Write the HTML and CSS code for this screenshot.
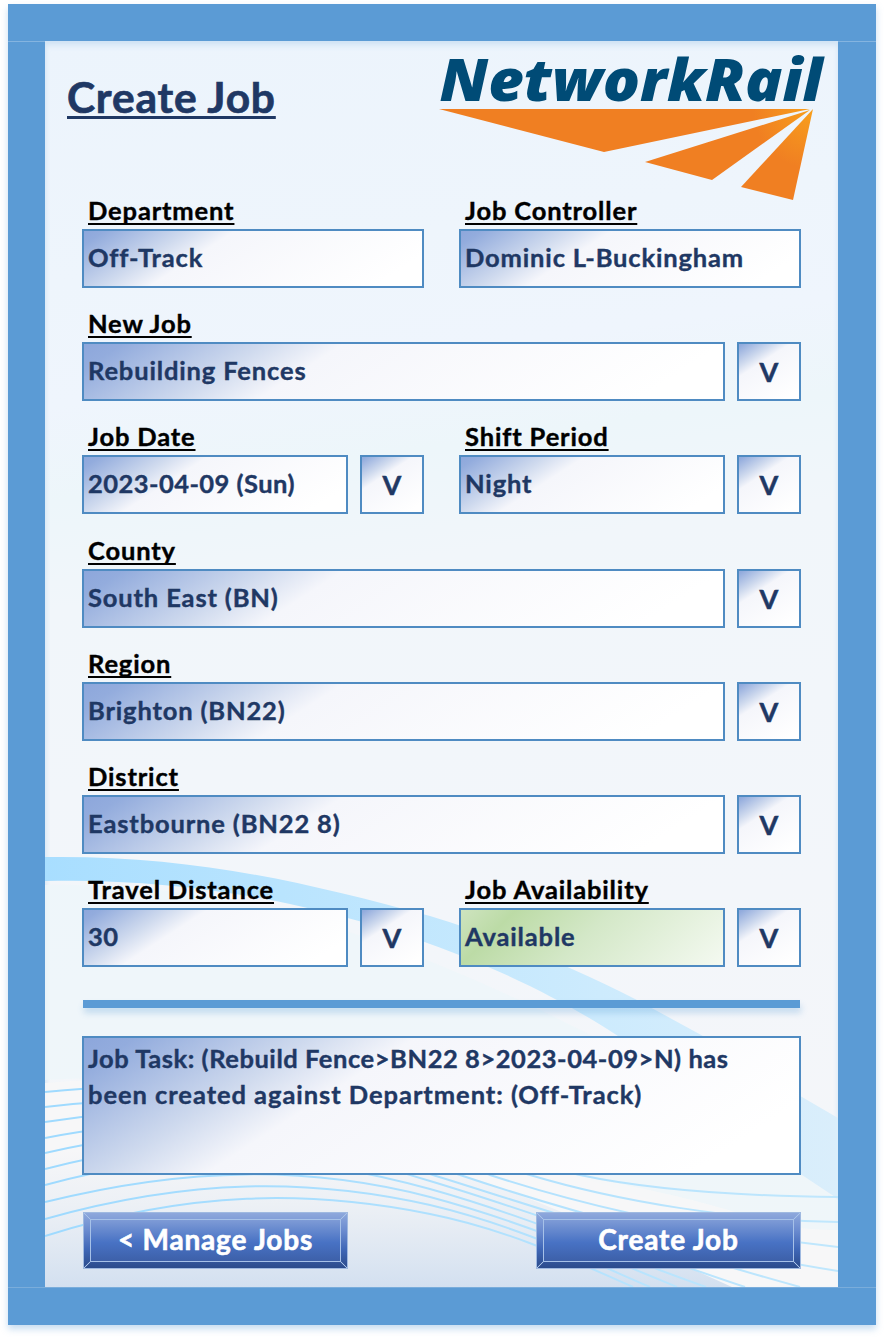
FILE: index.html
```html
<!DOCTYPE html>
<html lang="en">
<head>
<meta charset="utf-8">
<title>Create Job</title>
<link rel="stylesheet" href="styles.css">
</head>
<body>
<main class="frame">
  <div class="panel">
    <svg class="backdrop" viewBox="45 41 793 1246" width="793" height="1246" aria-hidden="true">
      <defs>
        <linearGradient id="ribbon" x1="0" x2="1" y1="0" y2="0">
          <stop offset="0" stop-color="#a8deff"/><stop offset=".3" stop-color="#b9e4fe"/><stop offset=".7" stop-color="#cdebfd"/><stop offset="1" stop-color="#daeefb"/>
        </linearGradient>
        <linearGradient id="floor" gradientUnits="userSpaceOnUse" x1="0" x2="0" y1="1150" y2="1287">
          <stop offset="0" stop-color="#d3e0f1" stop-opacity="0"/><stop offset=".4" stop-color="#d8e3f0" stop-opacity=".35"/><stop offset="1" stop-color="#d3e0f0"/>
        </linearGradient>
        <linearGradient id="strand" gradientUnits="userSpaceOnUse" x1="45" x2="838" y1="0" y2="0">
          <stop offset="0" stop-color="#9edaff"/><stop offset="1" stop-color="#c0e7fd"/>
        </linearGradient>
      </defs>
      <path fill="#edf6f9" opacity=".7" d="M45 885C300 880 500 990 640 1060L838 1200V1250C560 1190 330 1060 45 1080Z"/>
      <path fill="#f8f8f8" opacity=".8" d="M45 1083C230 1065 440 1150 600 1180S760 1230 838 1230V1287H45Z"/>
      <path fill="url(#floor)" d="M45 1150H330C450 1155 560 1212 690 1268L732 1287H45Z"/>
      <path fill="url(#ribbon)" d="M45 857C190 855 300 881 430 916C500 937 570 966 637 1000L703 1036L802 1097L838 1118V1199L802 1175L618 1036C500 958 290 875 45 881Z"/>
      <g fill="none" stroke="url(#strand)" stroke-width="2">
        <path d="M45 1092C240 1070 410 1135 580 1175C650 1190 740 1196 838 1197"/>
        <path d="M45 1107C240 1082 380 1132 530 1175C620 1202 735 1220 838 1222"/>
        <path d="M45 1122C235 1092 360 1133 490 1175C590 1208 710 1233 838 1247"/>
        <path d="M45 1138C230 1102 345 1138 460 1175C570 1212 720 1253 838 1271"/>
        <path d="M45 1153C220 1113 330 1143 430 1174C560 1215 690 1257 800 1287"/>
        <path d="M45 1169C215 1125 330 1150 430 1181C540 1214 640 1252 745 1287"/>
        <path d="M45 1185C205 1141 320 1159 430 1189C530 1217 615 1255 706 1287"/>
        <path d="M45 1202C190 1166 310 1166 430 1197C520 1221 600 1255 677 1287"/>
        <path d="M45 1219C190 1178 310 1178 430 1205C515 1225 585 1259 650 1287"/>
        <path d="M45 1236C190 1190 310 1190 430 1214C510 1230 574 1261 633 1287"/>
      </g>
    </svg>

    <header class="header">
      <h1 class="title">Create Job</h1>
      <svg class="logo" viewBox="438 30 390 174" width="390" height="174" role="img" aria-label="NetworkRail">
        <defs>
          <radialGradient id="flare" gradientUnits="userSpaceOnUse" cx="814" cy="109" r="60">
            <stop offset="0" stop-color="#f8a01c"/><stop offset="1" stop-color="#f07f22"/>
          </radialGradient>
        </defs>
        <text class="logo-text" x="440.5" y="101" textLength="383" lengthAdjust="spacingAndGlyphs">NetworkRail</text>
        <g fill="url(#flare)">
          <path d="M440 109H811L605 152Z"/>
          <path d="M811 110L646 162L713 180Z"/>
          <path d="M814 109L742 187L794 200Z"/>
        </g>
      </svg>
    </header>

    <form class="form">
      <div class="row">
        <div class="field"><label class="label">Department</label><div class="line"><div class="value">Off-Track</div></div></div>
        <div class="field"><label class="label">Job Controller</label><div class="line"><div class="value">Dominic L-Buckingham</div></div></div>
      </div>
      <div class="row">
        <div class="field"><label class="label">New Job</label><div class="line"><div class="value">Rebuilding Fences</div><button type="button" class="pick">V</button></div></div>
      </div>
      <div class="row">
        <div class="field"><label class="label">Job Date</label><div class="line"><div class="value numeric">2023-04-09 (Sun)</div><button type="button" class="pick">V</button></div></div>
        <div class="field"><label class="label">Shift Period</label><div class="line"><div class="value">Night</div><button type="button" class="pick">V</button></div></div>
      </div>
      <div class="row">
        <div class="field"><label class="label">County</label><div class="line"><div class="value">South East (BN)</div><button type="button" class="pick">V</button></div></div>
      </div>
      <div class="row">
        <div class="field"><label class="label">Region</label><div class="line"><div class="value">Brighton (BN22)</div><button type="button" class="pick">V</button></div></div>
      </div>
      <div class="row">
        <div class="field"><label class="label">District</label><div class="line"><div class="value">Eastbourne (BN22 8)</div><button type="button" class="pick">V</button></div></div>
      </div>
      <div class="row">
        <div class="field"><label class="label">Travel Distance</label><div class="line"><div class="value numeric">30</div><button type="button" class="pick">V</button></div></div>
        <div class="field"><label class="label">Job Availability</label><div class="line"><div class="value available">Available</div><button type="button" class="pick">V</button></div></div>
      </div>
    </form>

    <div class="divider"></div>
    <div class="message"><span class="message-lead">Job Task: (Rebuild Fence&gt;BN22 8&gt;2023-04-09&gt;N) has</span><br>been created against Department: (Off-Track)</div>
    <div class="actions">
      <button type="button" class="action"><span class="action-face">&lt; Manage Jobs</span></button>
      <button type="button" class="action"><span class="action-face">Create Job</span></button>
    </div>
  </div>
</main>
</body>
</html>
```
FILE: styles.css
```css
* { box-sizing: border-box; }

body {
  margin: 0;
  padding: 4px 9px 0 8px;
  height: 1339px;
  overflow: hidden;
  background: #fff;
  font-family: Lato, "Open Sans", sans-serif;
  font-weight: 700;
  color: #1f3864;
  -webkit-text-stroke: .4px currentColor;
}

.frame {
  width: 868px;
  height: 1321px;
  padding: 37px 38px 38px 37px;
  background:
    linear-gradient(#84b4e0, #84b4e0) 0 37px / 100% 1px no-repeat,
    linear-gradient(#7aaddb, #7aaddb) 0 1283px / 100% 1px no-repeat,
    #5b9bd5;
  box-shadow: 0 4px 7px rgba(91, 155, 213, .35);
}

.panel {
  position: relative;
  display: flex;
  flex-direction: column;
  height: 1246px;
  padding: 0 37px;
  background: linear-gradient(172deg, #ecf4fc 0, #eef5fc 18%, #eff5fd 27%, #edf6fa 34%, #f1f6fa 42%, #f3f6fa 70%, #f5f6f9 100%);
  box-shadow: inset 0 5px 6px -1px #cfe2f4, inset 1px 0 4px #deebf7;
}

.backdrop {
  position: absolute;
  inset: 0;
}

.header, .form, .divider, .message, .actions { position: relative; }

.header {
  display: flex;
  justify-content: space-between;
  height: 156px;
  margin: 0 -28px 0 -15px;
  padding-right: 2px;
}

.title {
  margin: 30px 0 0;
  font-size: 42.5px;
  line-height: 51px;
  letter-spacing: .8px;
  text-decoration: underline 3px;
  text-underline-offset: 3px;
  text-decoration-skip-ink: none;
  -webkit-text-stroke-width: .7px;
}

.logo {
  flex: none;
  margin-top: -11px;
}

.logo-text {
  font: italic 800 59px "Open Sans", "Noto Sans", sans-serif;
  fill: #004b76;
  -webkit-text-stroke: .8px #004b76;
}

.form {
  display: grid;
  grid-auto-rows: 91px;
  row-gap: 22.2px;
  height: 770px;
}

.row {
  display: flex;
  gap: 35px;
}

.field { flex: 1; min-width: 0; }

.label {
  display: block;
  width: max-content;
  height: 32px;
  margin-left: 6px;
  font-size: 25.5px;
  line-height: 27px;
  letter-spacing: .85px;
  color: #000;
  text-decoration: underline 2px;
  text-underline-offset: 3px;
  text-decoration-skip-ink: none;
}

.line {
  display: flex;
  gap: 12px;
}

.value, .pick, .message {
  border: 2px solid #4f8bc2;
  background: linear-gradient(147deg, #8ca6db 0, #93acdd 6%, #cfdaee 25%, #f5f6fb 36%, #fff 88%) border-box;
  font-size: 25.5px;
  letter-spacing: .85px;
}

.value {
  flex: 1;
  height: 59px;
  padding-left: 4px;
  line-height: 53px;
  white-space: nowrap;
}

.numeric { letter-spacing: .45px; }

.available {
  background: linear-gradient(135deg, #cfe4c1 0, #bcdba6 18%, #d4e8c8 48%, #f5faf2 100%) border-box;
}

.pick {
  width: 64px;
  height: 59px;
  padding: 0;
  font-family: inherit;
  font-weight: 700;
  font-size: 27px;
  line-height: 53px;
  letter-spacing: 0;
  color: inherit;
  -webkit-text-stroke: .5px currentColor;
}

.divider {
  height: 8px;
  margin: 33px 1px 28px;
  background: #5b9bd5;
  box-shadow: 1px 5px 6px rgba(91, 155, 213, .3);
}

.message {
  height: 139px;
  padding: 2px 4px;
  line-height: 36px;
  letter-spacing: .95px;
  white-space: nowrap;
}

.message-lead { letter-spacing: .55px; }

.actions {
  display: flex;
  justify-content: space-between;
  margin: 37px 0 0 1px;
}

/* Bevelled button: the four corner tiles carry the mitre lines. */
.action {
  width: 265px;
  height: 57px;
  padding: 6px;
  border: 1px solid #9fb9e0;
  background:
    linear-gradient(to top right, transparent 42%, #a9c3e8 50%, transparent 58%) 0 0 / 7px 7px no-repeat,
    linear-gradient(to bottom right, transparent 42%, #a9c3e8 50%, transparent 58%) 100% 0 / 7px 7px no-repeat,
    linear-gradient(to bottom right, transparent 42%, #a9c3e8 50%, transparent 58%) 0 100% / 7px 7px no-repeat,
    linear-gradient(to top right, transparent 42%, #a9c3e8 50%, transparent 58%) 100% 100% / 7px 7px no-repeat,
    linear-gradient(#8ea8dc, #6d8dd0 30%, #4068b8 65%, #2b4b8c);
}

.action-face {
  display: block;
  height: 43px;
  border: 1px solid #a6c1e8;
  background: linear-gradient(#7e9bd6, #4872c4 55%, #3d60a9);
  color: #fff;
  font: 700 28px/39px Lato, "Open Sans", sans-serif;
  letter-spacing: .8px;
  -webkit-text-stroke: .6px #fff;
}
```
